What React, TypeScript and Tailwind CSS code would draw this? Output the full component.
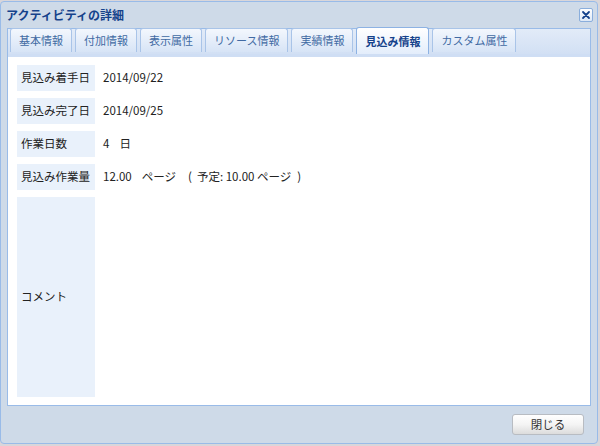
import React from "react";

const tabs = ["基本情報", "付加情報", "表示属性", "リソース情報", "実績情報", "見込み情報", "カスタム属性"];
const activeTab = "見込み情報";

const rows: { label: string; value: React.ReactNode }[] = [
  { label: "見込み着手日", value: "2014/09/22" },
  { label: "見込み完了日", value: "2014/09/25" },
  {
    label: "作業日数",
    value: (
      <>
        <span>4</span>
        <span className="ml-[10px]">日</span>
      </>
    ),
  },
  {
    label: "見込み作業量",
    value: (
      <>
        <span>12.00</span>
        <span className="ml-[10px]">ページ</span>
        <span className="ml-[12px]">(</span>
        <span className="ml-[5px]">予定: 10.00 ページ</span>
        <span className="ml-[6px]">)</span>
      </>
    ),
  },
];

const font = { fontFamily: '"Noto Sans CJK JP", "Noto Sans", sans-serif' };

function Tab({ label, active }: { label: string; active: boolean }) {
  return (
    <div
      className={
        active
          ? "flex h-[27px] items-center rounded-t-[3px] border border-b-0 border-[#8db2e3] bg-gradient-to-b from-[#ffffff] to-[#e3edfb] px-[8px] text-[11px] font-bold text-[#15428b]"
          : "mb-[2px] flex h-[24px] items-center rounded-t-[3px] border border-b-0 border-[#a9c4e8] bg-gradient-to-b from-[#f3f7fd] to-[#d7e4f6] px-[8px] text-[11px] text-[#416aa3]"
      }
    >
      {label}
    </div>
  );
}

export default function App() {
  return (
    <div className="h-[446px] w-[600px] bg-[#d9d6da] pt-[1px]" style={font}>
      <div className="flex h-[443px] w-[598px] flex-col rounded-[4px] border border-[#99bbe8] bg-[#cedae8]">
        <div className="flex h-[26px] items-center justify-between pl-[5px] pr-[4px]">
          <span className="text-[12px] font-bold text-[#15428b]">アクティビティの詳細</span>
          <button className="flex h-[14px] w-[14px] items-center justify-center rounded-[2px] border border-[#8aaedc] bg-gradient-to-b from-[#ffffff] to-[#dde8f6]">
            <svg width="10" height="10" viewBox="0 0 10 10">
              <path d="M2 2 L8 8 M8 2 L2 8" stroke="#15428b" strokeWidth="1.8" strokeLinecap="round" />
            </svg>
          </button>
        </div>

        <div className="mx-[6px] flex h-[378px] flex-col border border-[#99bbe8] bg-white">
          <div className="flex h-[28px] items-end gap-[3px] border-b-[3px] border-[#cfdef4] bg-gradient-to-b from-[#e2ebf8] to-[#d2e0f4] pl-[2px]">
            {tabs.map((t) => (
              <Tab key={t} label={t} active={t === activeTab} />
            ))}
          </div>
          <div className="flex flex-1 flex-col gap-[7px] px-[9px] py-[8px] text-[11.5px] text-[#222]">
            {rows.map((r) => (
              <div key={r.label} className="flex h-[26px] items-stretch">
                <div className="flex w-[78px] items-center bg-[#e9f1fb] pl-[4px]">{r.label}</div>
                <div className="flex items-center pl-[8px]">{r.value}</div>
              </div>
            ))}
            <div className="flex flex-1">
              <div className="flex w-[78px] items-center bg-[#e9f1fb] pl-[4px]">コメント</div>
            </div>
          </div>
        </div>

        <div className="flex flex-1 items-center justify-end pr-[13px]">
          <button className="h-[21px] w-[72px] rounded-[3px] border border-[#b8bcc2] bg-gradient-to-b from-[#ffffff] via-[#f4f4f4] to-[#dcdcdc] text-[11.5px] text-[#333]">
            閉じる
          </button>
        </div>
      </div>
    </div>
  );
}
